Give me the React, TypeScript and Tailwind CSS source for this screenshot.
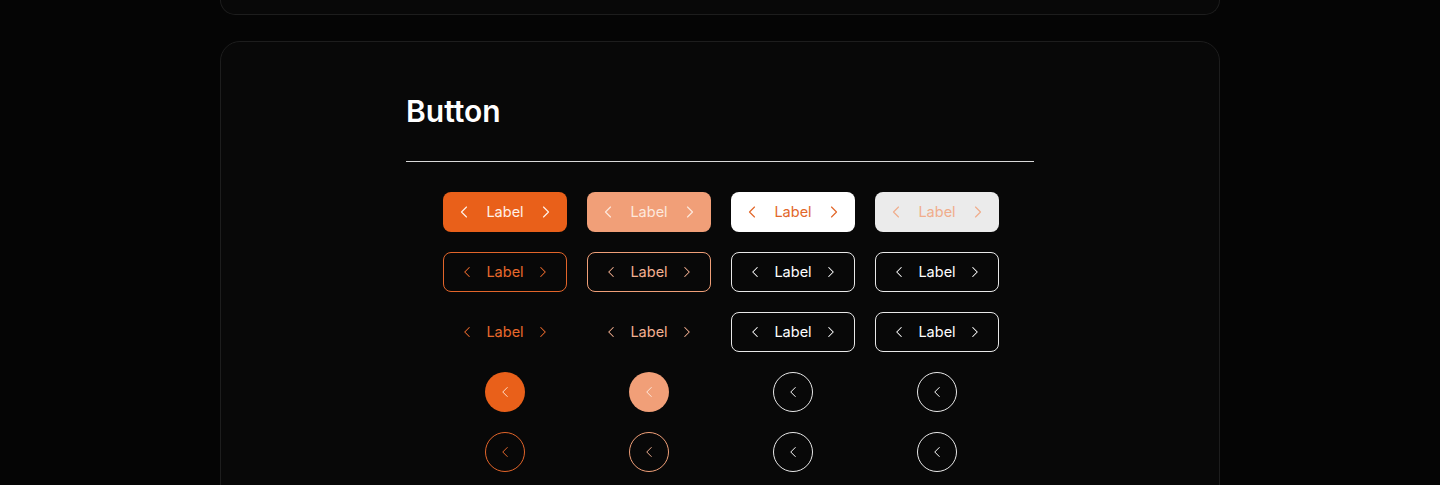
import { ChevronLeft, ChevronRight } from "lucide-react";

type Variant = {
  box: string;
  text: string;
};

// one entry per column, for each of the five rows
const labelRows: Variant[][] = [
  [
    { box: "bg-[#e9601a]", text: "text-[#fff1e8]" },
    { box: "bg-[#f19f78]", text: "text-[#fde9dd]" },
    { box: "bg-white", text: "text-[#e2672a]" },
    { box: "bg-[#ebebeb]", text: "text-[#f0ad8c]" },
  ],
  [
    { box: "border border-[#e2652a]", text: "text-[#e8692c]" },
    { box: "border border-[#ef9f78]", text: "text-[#f4b091]" },
    { box: "border border-[#e8e8e8]", text: "text-white" },
    { box: "border border-[#e8e8e8]", text: "text-white" },
  ],
  [
    { box: "", text: "text-[#e8692c]" },
    { box: "", text: "text-[#f4b091]" },
    { box: "border border-[#e8e8e8]", text: "text-white" },
    { box: "border border-[#e8e8e8]", text: "text-white" },
  ],
];

const circleRows: Variant[][] = [
  [
    { box: "bg-[#e9601a]", text: "text-[#fde2cf]" },
    { box: "bg-[#f19f78]", text: "text-[#fde9dd]" },
    { box: "border border-[#e8e8e8]", text: "text-white" },
    { box: "border border-[#e8e8e8]", text: "text-white" },
  ],
  [
    { box: "border border-[#e2652a]", text: "text-[#e8692c]" },
    { box: "border border-[#ef9f78]", text: "text-[#f4b091]" },
    { box: "border border-[#e8e8e8]", text: "text-white" },
    { box: "border border-[#e8e8e8]", text: "text-white" },
  ],
];

function LabelButton({ v, large }: { v: Variant; large?: boolean }) {
  return (
    <button
      className={`flex h-10 w-[124px] items-center justify-center rounded-lg text-[14.5px] ${
        large ? "gap-3" : "gap-2.5"
      } ${v.box} ${v.text}`}
    >
      <ChevronLeft size={large ? 20 : 18} strokeWidth={1.4} />
      <span>Label</span>
      <ChevronRight size={large ? 20 : 18} strokeWidth={1.4} />
    </button>
  );
}

function CircleButton({ v }: { v: Variant }) {
  return (
    <button
      className={`flex h-10 w-10 items-center justify-center rounded-full ${v.box} ${v.text}`}
    >
      <ChevronLeft size={18} strokeWidth={1.3} />
    </button>
  );
}

export default function App() {
  return (
    <div className="min-h-screen bg-[#050505] font-['Inter',sans-serif]">
      <div className="mx-auto h-[15px] w-[1000px] rounded-b-[20px] border-x border-b border-[#1d1d1d] bg-[#080808]" />

      <section className="mx-auto mt-[26px] w-[1000px] rounded-[20px] border border-[#1d1d1d] bg-[#080808] pb-20 pt-[51px]">
        <div className="mx-auto w-[628px]">
          <h2 className="text-3xl font-semibold text-white">Button</h2>
          <div className="mt-[32px] h-px bg-[#d9d9d9]" />

          <div className="mx-auto mt-[30px] grid w-[576px] translate-x-px grid-cols-4 justify-items-center gap-y-5">
            {labelRows.map((row, r) =>
              row.map((v, c) => (
                <LabelButton key={`l${r}-${c}`} v={v} large={r === 0} />
              ))
            )}
            {circleRows.map((row, r) =>
              row.map((v, c) => <CircleButton key={`c${r}-${c}`} v={v} />)
            )}
          </div>
        </div>
      </section>
    </div>
  );
}
